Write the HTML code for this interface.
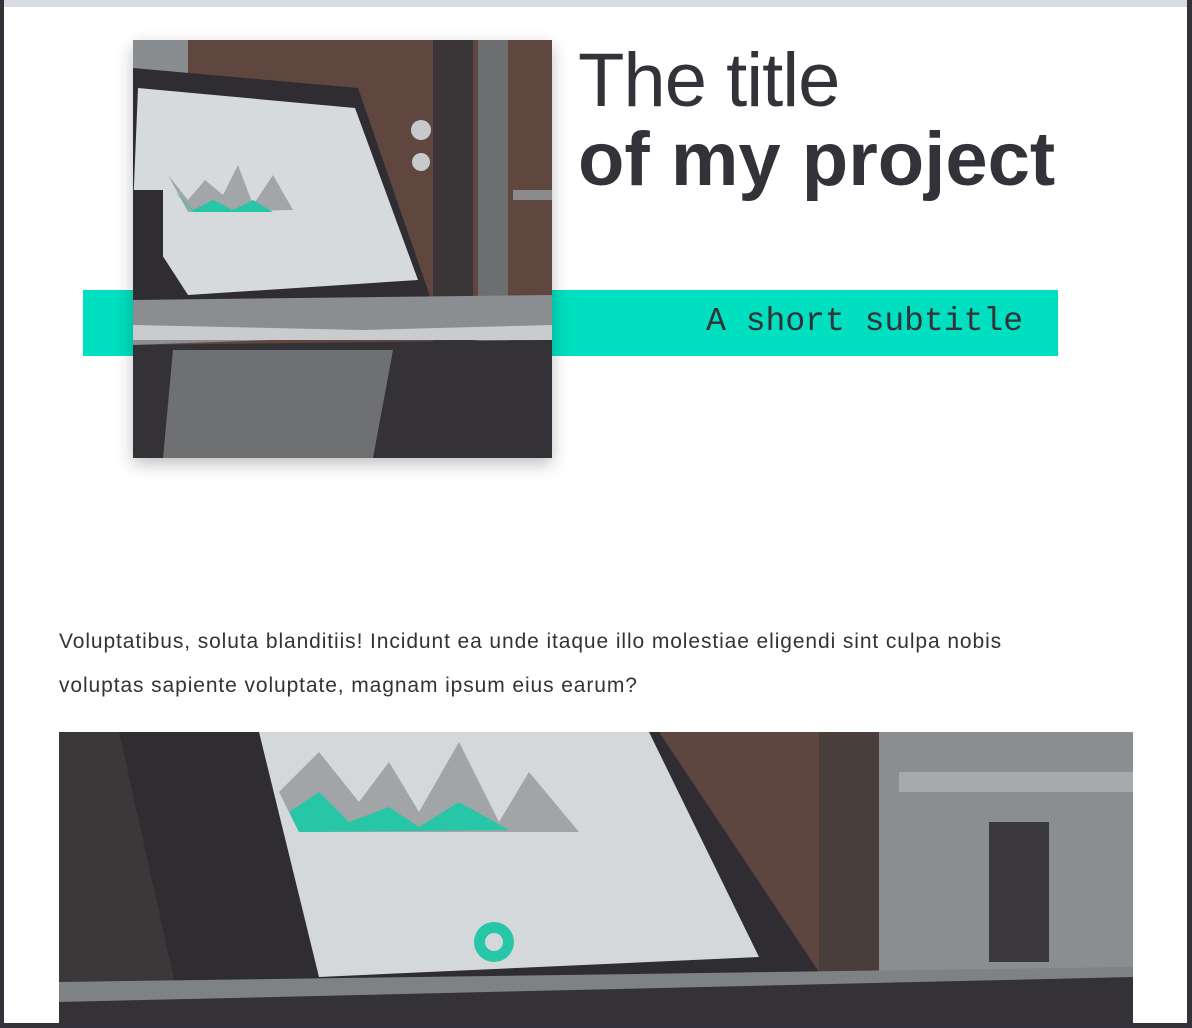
<!DOCTYPE html>
<html><head><meta charset="utf-8"><style>
html,body{margin:0;padding:0}
body{width:1192px;height:1028px;position:relative;overflow:hidden;background:#fff;font-family:"Liberation Sans",sans-serif;color:#333238}
.bt{position:absolute;left:0;top:0;width:1192px;height:7px;background:#d8dbe3}
.bl{position:absolute;left:0;top:0;width:4px;height:1028px;background:#333238}
.br{position:absolute;right:0;top:0;width:5px;height:1028px;background:#333238}
.bb{position:absolute;left:0;bottom:0;width:1192px;height:5px;background:#333238}
.bar{position:absolute;left:83px;top:290px;width:975px;height:66px;background:#00dfbf}
.sub{position:absolute;left:600px;width:423px;top:300px;text-align:right;font-family:"Liberation Mono",monospace;font-size:33px;line-height:44px;color:#333238}
.img1{position:absolute;left:133px;top:40px;width:419px;height:418px;box-shadow:0 6px 16px rgba(0,0,0,.25)}
.t1{position:absolute;left:578px;top:36px;font-size:76px;line-height:90px;font-weight:400;letter-spacing:-1px}
.t2{position:absolute;left:578px;top:115px;font-size:76px;line-height:90px;font-weight:700;letter-spacing:0}
.p{position:absolute;left:59px;top:620px;font-size:21px;line-height:44px;white-space:nowrap;letter-spacing:0.9px}
.img2{position:absolute;left:59px;top:732px;width:1074px;height:291px}
</style></head><body>
<div class="bt"></div>
<div class="bar"></div>
<div class="sub">A short subtitle</div>
<svg class="img1" viewBox="0 0 419 418">
<rect width="419" height="418" fill="#5f463f"/>
<rect x="0" y="0" width="55" height="40" fill="#8a8d90"/>
<rect x="300" y="0" width="40" height="418" fill="#3a3638"/>
<rect x="345" y="0" width="30" height="418" fill="#6d6e70"/>
<rect x="380" y="150" width="39" height="10" fill="#8a8b8d"/>
<circle cx="288" cy="90" r="10" fill="#c8c9cc"/><circle cx="288" cy="122" r="9" fill="#c8c9cc"/>
<polygon points="0,28 225,48 300,265 0,270" fill="#2f2d31"/>
<polygon points="5,48 222,68 285,240 55,255 0,170" fill="#d7dadd"/>
<polygon points="35,135 55,160 72,140 90,155 105,125 120,165 140,135 160,170 55,172" fill="#a2a6a8"/>
<polygon points="40,150 60,170 80,160 100,170 120,160 140,172 60,172" fill="#26c6a6"/>
<rect x="0" y="150" width="30" height="120" fill="#2f2d31"/>
<polygon points="0,260 419,255 419,290 0,305" fill="#8b8e91"/>
<polygon points="0,285 230,290 419,285 419,300 0,300" fill="#c9cbce"/>
<polygon points="0,305 419,300 419,418 0,418" fill="#343236"/>
<polygon points="40,310 260,310 240,418 30,418" fill="#6e7072"/>
</svg>
<div class="t1">The title</div>
<div class="t2">of my project</div>
<div class="p">Voluptatibus, soluta blanditiis! Incidunt ea unde itaque illo molestiae eligendi sint culpa nobis<br>voluptas sapiente voluptate, magnam ipsum eius earum?</div>
<svg class="img2" viewBox="0 0 1074 291" preserveAspectRatio="none">
<rect width="1074" height="291" fill="#5e4640"/>
<rect x="0" y="0" width="120" height="291" fill="#3a3839"/>
<rect x="820" y="0" width="254" height="291" fill="#8b8e91"/>
<rect x="840" y="40" width="234" height="20" fill="#a7a9ab"/>
<rect x="760" y="0" width="60" height="291" fill="#4a3e3c"/>
<rect x="930" y="90" width="60" height="140" fill="#3b393b"/>
<polygon points="60,0 600,0 760,240 120,270" fill="#2f2d31"/>
<polygon points="200,0 590,0 700,225 260,245" fill="#d5d8db"/>
<polygon points="220,60 260,20 300,70 330,30 360,80 400,10 440,90 470,40 520,100 240,100" fill="#a1a5a7"/>
<polygon points="230,80 260,60 290,90 330,75 360,95 400,70 450,98 240,100" fill="#26c6a6"/>
<circle cx="435" cy="210" r="20" fill="#26c6a6"/><circle cx="435" cy="210" r="9" fill="#d5d8db"/>
<polygon points="0,250 1074,235 1074,291 0,291" fill="#7f8285"/>
<polygon points="0,270 1074,245 1074,291 0,291" fill="#343236"/>
</svg>
<div class="bl"></div><div class="br"></div><div class="bb"></div>
</body></html>
